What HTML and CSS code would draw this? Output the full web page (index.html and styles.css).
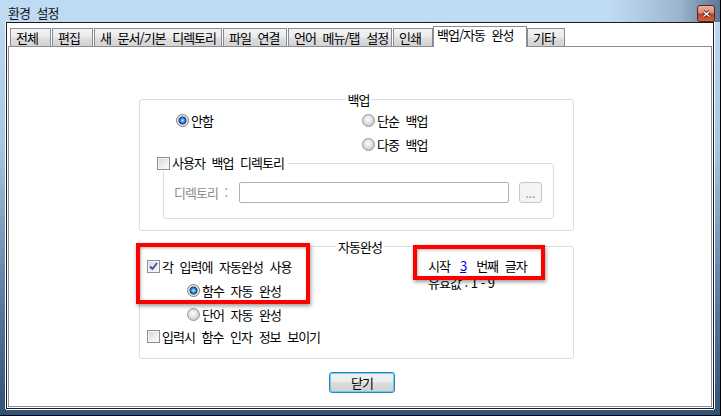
FILE: index.html
```html
<!DOCTYPE html>
<html lang="ko">
<head>
    <meta charset="UTF-8">
    <title>환경 설정</title>
    <link rel="stylesheet" href="styles.css">
</head>
<body>

<div class="window">
    <div class="titlebar">
        <span class="title">환경 설정</span>
        <span class="close-btn">
            <svg width="9" height="8" viewBox="0 0 9 8">
                <path d="M1.5 1.5l6 5m0-5l-6 5" stroke="#4a1a10" stroke-width="3" fill="none"/>
                <path d="M1.5 1.5l6 5m0-5l-6 5" stroke="#fff" stroke-width="1.5" fill="none"/>
            </svg>
        </span>
    </div>

    <div class="client">
        <ul class="tabs">
            <li class="tab">전체</li>
            <li class="tab">편집</li>
            <li class="tab">새 문서/기본 디렉토리</li>
            <li class="tab">파일 연결</li>
            <li class="tab">언어 메뉴/탭 설정</li>
            <li class="tab">인쇄</li>
            <li class="tab active">백업/자동 완성</li>
            <li class="tab">기타</li>
        </ul>

        <div class="panel">
            <fieldset class="group group-backup">
                <legend>백업</legend>
                <div class="radio-grid">
                    <label class="opt"><span class="radio on"></span><span>안함</span></label>
                    <label class="opt"><span class="radio"></span><span>단순 백업</span></label>
                    <label class="opt col2"><span class="radio"></span><span>다중 백업</span></label>
                </div>
                <fieldset class="subgroup">
                    <legend><label class="opt"><span class="check"></span><span>사용자 백업 디렉토리</span></label></legend>
                    <div class="dir-row">
                        <span class="dir-label">디렉토리 :</span>
                        <span class="dir-input"></span>
                        <span class="browse-btn">...</span>
                    </div>
                </fieldset>
            </fieldset>

            <fieldset class="group group-auto">
                <legend>자동완성</legend>
                <div class="auto-grid">
                    <div class="auto-opts">
                        <label class="opt">
                            <span class="check">
                                <svg width="11" height="11" viewBox="0 0 11 11"><path d="M2 5.5l2.5 2.5 4.5-6" fill="none" stroke="#3d4f9a" stroke-width="1.8"/></svg>
                            </span><span>각 입력에 자동완성 사용</span>
                        </label>
                        <label class="opt sub"><span class="radio on"></span><span>함수 자동 완성</span></label>
                        <label class="opt sub"><span class="radio"></span><span>단어 자동 완성</span></label>
                        <label class="opt last"><span class="check"></span><span>입력시 함수 인자 정보 보이기</span></label>
                    </div>
                    <div class="start-char">
                        <div class="start-row"><span>시작</span><a class="num">3</a><span>번째 글자</span></div>
                        <div class="range">유효값 : 1 - 9</div>
                    </div>
                </div>
            </fieldset>

            <button class="ok-btn">닫기</button>
        </div>
    </div>

    <div class="mark mark-options"></div>
    <div class="mark mark-start"></div>
</div>

</body>
</html>
```

FILE: styles.css
```css
* {
    box-sizing: border-box;
}

body {
    margin: 0;
    font-family: "Noto Sans CJK KR", sans-serif;
    font-size: 13px;
    letter-spacing: -1px;
    word-spacing: 4px;
    color: #000;
}

.window {
    position: relative;
    width: 721px;
    height: 416px;
    display: flex;
    flex-direction: column;
    padding: 0 6px 6px;
    border-right: 1px solid #000;
    border-bottom: 1px solid #000;
    background: linear-gradient(#bfdbf2 0%, #a9c6e3 35%, #54779c 75%, #2f5277 100%);
    overflow: hidden;
}

/* title bar */
.titlebar {
    display: flex;
    align-items: flex-start;
    height: 22px;
    margin: 0 -6px;
    padding: 0 5px 0 8px;
    background: linear-gradient(to right, #bedbf3 0, #c0dcf4 610px, #9cb4cc 680px, #5c7896 720px);
}

.title {
    padding-top: 5px;
    line-height: 16px;
    color: #111;
}

.close-btn {
    display: flex;
    align-items: center;
    justify-content: center;
    width: 18px;
    height: 17px;
    margin: 5px 0 0 auto;
    border: 1px solid #5a2419;
    border-radius: 3px;
    background: linear-gradient(#eab3a4 0%, #dc8a72 45%, #c43f1f 55%, #d4603f 100%);
}

/* client area */
.client {
    flex: 1;
    display: flex;
    flex-direction: column;
    padding: 0 1px 1px;
    background: #fff;
    border: 1px solid #1b1b1b;
    box-shadow: -1px 0 #fff, 1px 0 #fff, 0 1px #fff;
}

.tabs {
    display: grid;
    grid-template-columns: 41px 41px 128px 64px 104px 40px 92px 38px;
    column-gap: 1px;
    align-items: end;
    height: 23px;
    margin: 0;
    padding: 0 0 0 2px;
    list-style: none;
}

.tab {
    height: 18px;
    padding-left: 5px;
    line-height: 17px;
    white-space: nowrap;
    border: 1px solid #898c95;
    border-bottom: none;
    background: linear-gradient(#f3f3f3 0%, #ebebeb 45%, #dedede 55%, #d3d3d3 100%);
}

.tab.active {
    position: relative;
    z-index: 1;
    height: 21px;
    margin: 0 -1px -1px;
    padding: 0 0 4px 3px;
    line-height: 16px;
    background: #fff;
}

.panel {
    flex: 1;
    display: flex;
    flex-direction: column;
    align-items: flex-start;
    padding: 45px 0 0 130px;
    border: 1px solid #898c95;
}

/* group boxes */
.group,
.subgroup {
    min-width: 0;
    margin: 0;
    border: 1px solid #d5dfe5;
    border-radius: 3px;
}

.group {
    width: 435px;
}

.group > legend {
    margin: 0 auto;
    padding: 0 2px;
    line-height: 15px;
}

.group-backup {
    padding: 5px 19px 11px 23px;
}

.group-auto {
    margin-top: 8px;
    padding: 4px 0 14px 7px;
}

.opt {
    display: flex;
    align-items: center;
    height: 16px;
    white-space: nowrap;
}

.radio,
.check {
    flex: none;
    width: 13px;
    height: 13px;
    margin-right: 2px;
}

.radio {
    border: 1px solid #939393;
    border-radius: 50%;
    background: radial-gradient(circle at 45% 40%, #fdfdfd 0, #e8e8e8 3px, #d0d0d0 6px);
}

.radio.on {
    border-color: #7d7d7d;
    background: radial-gradient(circle, #c6efff 0, #4aa6ea 1.6px, #1a5fb4 3px, #0e3e78 3.7px, #dcdcdc 4.3px, #f2f2f2 6px);
}

.check {
    display: flex;
    align-items: center;
    justify-content: center;
    border: 1px solid #8e8f8f;
    background: linear-gradient(135deg, #d0d3d7 0%, #eeeeee 60%, #fbfbfb 100%);
    box-shadow: inset 0 0 0 1px #f6f6f6;
}

.radio-grid {
    display: grid;
    grid-template-columns: 186px auto;
    grid-auto-rows: 16px;
    row-gap: 8px;
    padding-left: 13px;
}

.radio-grid .col2 {
    grid-column: 2;
}

.subgroup {
    margin-top: 3px;
    padding: 11px 11px 15px 0;
}

.subgroup > legend {
    margin-left: -7px;
    padding: 0 4px 0 0;
    line-height: 16px;
}

.dir-row {
    display: flex;
    align-items: center;
    margin-left: 10px;
}

.dir-label {
    width: 65px;
    color: #8d8d8d;
}

.dir-input {
    width: 270px;
    height: 21px;
    border: 1px solid #b0b0b0;
    border-radius: 2px;
    background: #fff;
}

.browse-btn {
    width: 23px;
    height: 21px;
    margin-left: 10px;
    padding-top: 2px;
    font-size: 12px;
    line-height: 16px;
    text-align: center;
    letter-spacing: 0;
    color: #9a9a9a;
    border: 1px solid #c6c6c6;
    border-radius: 3px;
    background: #f4f4f4;
}

/* auto complete */
.auto-grid {
    display: grid;
    grid-template-columns: 281px auto;
}

.auto-opts {
    display: flex;
    flex-direction: column;
    gap: 8px;
}

.auto-opts .sub {
    margin-left: 40px;
}

.auto-opts .last {
    margin-top: -2px;
}

.start-row {
    display: flex;
    line-height: 16px;
}

.num {
    margin: 0 10px;
    color: #0000ee;
    text-decoration: underline;
}

.range {
    margin-top: 1px;
    line-height: 16px;
    word-spacing: 1px;
}

.ok-btn {
    width: 66px;
    height: 21px;
    margin: 13px 0 0 190px;
    padding: 0;
    font: inherit;
    letter-spacing: -1px;
    color: #000;
    border: 1px solid #3c7fb1;
    border-radius: 3px;
    background: linear-gradient(#f2f2f2 0%, #ebebeb 50%, #dddddd 50%, #cfcfcf 100%);
    box-shadow: inset 0 0 0 1px #5fd3f7;
}

/* red annotation boxes */
.mark {
    position: absolute;
    border: 4px solid #f00;
    box-shadow: 1px 2px 4px rgba(0, 0, 0, 0.4), inset 1px 1px 3px rgba(0, 0, 0, 0.3);
}

.mark-options {
    left: 136px;
    top: 243px;
    width: 174px;
    height: 61px;
}

.mark-start {
    left: 413px;
    top: 245px;
    width: 132px;
    height: 35px;
}
```
